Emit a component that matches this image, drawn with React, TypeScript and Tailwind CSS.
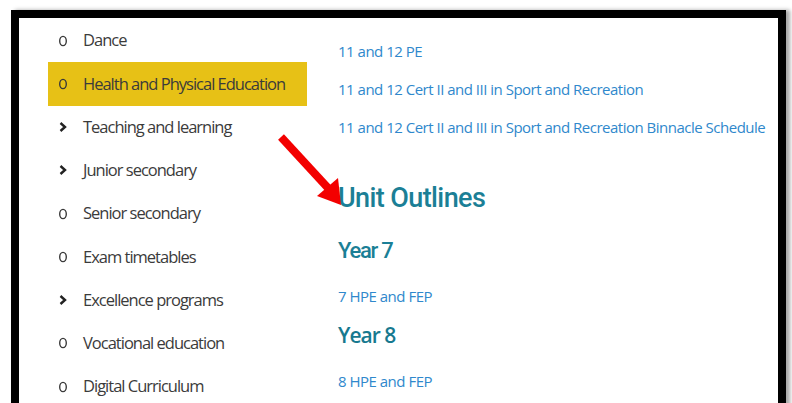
import type { ReactNode } from "react";

type NavItem = { label: string; kind: "dot" | "chevron"; active?: boolean };

const navItems: NavItem[] = [
  { label: "Dance", kind: "dot" },
  { label: "Health and Physical Education", kind: "dot", active: true },
  { label: "Teaching and learning", kind: "chevron" },
  { label: "Junior secondary", kind: "chevron" },
  { label: "Senior secondary", kind: "dot" },
  { label: "Exam timetables", kind: "dot" },
  { label: "Excellence programs", kind: "chevron" },
  { label: "Vocational education", kind: "dot" },
  { label: "Digital Curriculum", kind: "dot" },
];

function Dot() {
  return (
    <svg width="8" height="12" viewBox="0 0 8 12" className="shrink-0">
      <ellipse cx="4" cy="6" rx="3.3" ry="4.6" fill="none" stroke="#3a3a3a" strokeWidth="1.4" />
    </svg>
  );
}

function Chevron() {
  return (
    <svg width="8" height="10" viewBox="0 0 8 10" className="shrink-0">
      <path d="M1.5 1 L6 5 L1.5 9" fill="none" stroke="#222" strokeWidth="2.4" strokeLinejoin="miter" />
    </svg>
  );
}

function NavRow({ item }: { item: NavItem }) {
  return (
    <div
      className={`flex h-[43.25px] items-center pl-[11px] ${item.active ? "bg-[#e7c116]" : ""}`}
    >
      <div className="flex w-[24px] shrink-0 items-center">{item.kind === "dot" ? <Dot /> : <Chevron />}</div>
      <span className="whitespace-nowrap text-[16.5px] text-[#3b3b3b] tracking-[-1px]">
        {item.label}
      </span>
    </div>
  );
}

function Link({ children, h }: { children: ReactNode; h: string }) {
  return (
    <div className={`flex items-center ${h}`}>
      <a className="whitespace-nowrap text-[15px] text-[#2f88cc] tracking-[-0.5px]">{children}</a>
    </div>
  );
}

export default function App() {
  return (
    <div className="relative h-[403px] w-[792px] overflow-hidden bg-white font-['Open_Sans',sans-serif]">
      <div className="ml-[11px] mt-[10px] h-[420px] w-[775px] border-[8px] border-b-0 border-black shadow-[4px_0_4px_rgba(0,0,0,0.35)]">
        <div className="flex pt-[1px]">
          <nav className="ml-[29px] w-[259px] shrink-0">
            {navItems.map((item) => (
              <NavRow key={item.label} item={item} />
            ))}
          </nav>

          <main className="ml-[31px] flex flex-col pt-[13px]">
            <Link h="h-[38px]">11 and 12 PE</Link>
            <Link h="h-[38px]">11 and 12 Cert II and III in Sport and Recreation</Link>
            <Link h="h-[38px]">11 and 12 Cert II and III in Sport and Recreation Binnacle Schedule</Link>
            <div className="mt-[34px] flex h-[36px] items-center">
              <h2 className="font-['Roboto',sans-serif] text-[27px] font-medium text-[#1b7f96] tracking-[-0.6px]">
                Unit Outlines
              </h2>
            </div>
            <div className="flex h-[68px] items-center">
              <h3 className="font-['Roboto',sans-serif] text-[22px] font-medium text-[#1b7f96] tracking-[-1.3px]">Year 7</h3>
            </div>
            <Link h="h-[24px]">7 HPE and FEP</Link>
            <div className="flex h-[56px] items-center">
              <h3 className="text-[21px] font-semibold text-[#17798f] tracking-[-1px]">Year 8</h3>
            </div>
            <Link h="h-[34px]">8 HPE and FEP</Link>
          </main>
        </div>
      </div>

      {/* red pointer arrow */}
      <svg className="pointer-events-none absolute left-0 top-0" width="792" height="403">
        <line x1="281" y1="137" x2="328" y2="188" stroke="#f30000" strokeWidth="8" />
        <polygon points="317,196 338,178 341,205" fill="#f30000" />
      </svg>
    </div>
  );
}
